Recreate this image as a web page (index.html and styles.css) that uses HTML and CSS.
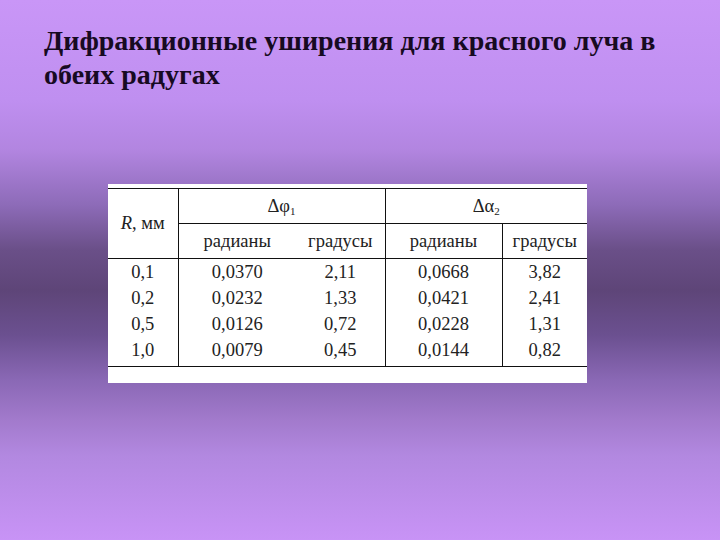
FILE: index.html
```html
<!DOCTYPE html>
<html lang="ru">
<head>
<meta charset="utf-8">
<title>Дифракционные уширения</title>
<link rel="stylesheet" href="styles.css">
</head>
<body>
<div class="slide">
  <h1 class="title">Дифракционные уширения для красного луча в обеих радугах</h1>
  <div class="figure">
    <div class="sheet">
      <table class="data">
        <colgroup>
          <col class="c1"><col class="c2"><col class="c3"><col class="c4"><col class="c5">
        </colgroup>
        <thead>
          <tr class="h1">
            <th rowspan="2" class="rcol"><i>R</i>, мм</th>
            <th colspan="2" class="grp">Δφ<sub>1</sub></th>
            <th colspan="2" class="grp">Δα<sub>2</sub></th>
          </tr>
          <tr class="h2">
            <th class="grp">радианы</th>
            <th>градусы</th>
            <th class="grp">радианы</th>
            <th class="grp">градусы</th>
          </tr>
        </thead>
        <tbody>
          <tr class="first"><td>0,1</td><td class="grp">0,0370</td><td>2,11</td><td class="grp">0,0668</td><td class="grp">3,82</td></tr>
          <tr><td>0,2</td><td class="grp">0,0232</td><td>1,33</td><td class="grp">0,0421</td><td class="grp">2,41</td></tr>
          <tr><td>0,5</td><td class="grp">0,0126</td><td>0,72</td><td class="grp">0,0228</td><td class="grp">1,31</td></tr>
          <tr class="last"><td>1,0</td><td class="grp">0,0079</td><td>0,45</td><td class="grp">0,0144</td><td class="grp">0,82</td></tr>
        </tbody>
      </table>
    </div>
  </div>
</div>
</body>
</html>
```

FILE: styles.css
```css
html, body {
  margin: 0;
  padding: 0;
}

.slide {
  width: 720px;
  height: 540px;
  overflow: hidden;
  font-family: "Liberation Serif", "Times New Roman", serif;
  background: linear-gradient(to bottom,
    #c996f7 0px,
    #bf8ff0 100px,
    #b285e0 150px,
    #8d6bb8 205px,
    #6a4f88 250px,
    #5e4578 290px,
    #6b5090 335px,
    #8a68b5 380px,
    #a27acc 420px,
    #b288e0 455px,
    #c893f6 540px);
}

.title {
  margin: 0;
  padding: 24px 30px 0 44px;
  height: 184px;
  box-sizing: border-box;
  font-size: 28px;
  line-height: 34px;
  font-weight: bold;
  color: #170a22;
  width: 690px;
}

.figure {
  padding: 0 0 0 108px;
}

.sheet {
  width: 479px;
  height: 199px;
  background: #ffffff;
  padding-top: 4px;
  box-sizing: border-box;
}

.data {
  width: 479px;
  border-collapse: collapse;
  table-layout: fixed;
  font-size: 18.5px;
  color: #222222;
}

.c1 { width: 70px; }
.c2 { width: 118px; }
.c3 { width: 89px; }
.c4 { width: 117px; }
.c5 { width: 85px; }

.data th,
.data td {
  font-weight: normal;
  text-align: center;
  padding: 0;
}

.data th.grp,
.data td.grp {
  border-left: 1px solid #111111;
}

.data thead tr.h1 th {
  border-top: 1px solid #111111;
  height: 34px;
  border-bottom: 1px solid #111111;
}

.data thead tr.h2 th {
  height: 34px;
  border-bottom: 1px solid #111111;
}

.data sub {
  font-size: 11px;
  vertical-align: -3px;
}

.data tbody td {
  height: 26px;
  line-height: 26px;
}

.data tbody tr.last td {
  height: 29px;
  vertical-align: top;
  border-bottom: 1px solid #111111;
}
```
